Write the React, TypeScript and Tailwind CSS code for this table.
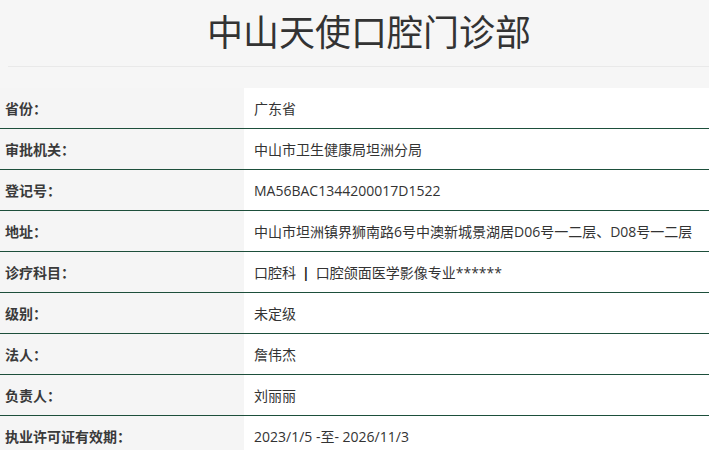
import React from "react";

const ROWS = [
  { label: "省份：", value: "广东省" },
  { label: "审批机关：", value: "中山市卫生健康局坦洲分局" },
  { label: "登记号：", value: "MA56BAC1344200017D1522" },
  { label: "地址：", value: "中山市坦洲镇界狮南路6号中澳新城景湖居D06号一二层、D08号一二层" },
  {
    label: "诊疗科目：",
    value: (
      <>
        口腔科<span className="mx-[6px] font-bold text-[#222]">|</span>口腔颌面医学影像专业******
      </>
    ),
  },
  { label: "级别：", value: "未定级" },
  { label: "法人：", value: "詹伟杰" },
  { label: "负责人：", value: "刘丽丽" },
  { label: "执业许可证有效期：", value: "2023/1/5 -至- 2026/11/3" },
];

const App = () => {
  return (
    <div
      className="min-h-screen w-full bg-[#f6f6f6] text-[#333] overflow-hidden"
      style={{ fontFamily: '"Noto Sans CJK SC", "Noto Sans", sans-serif' }}
    >
      <div className="ml-2 h-[67px] border-b border-[#e9e9e9] flex items-start justify-center pl-[21px]">
        <h1 className="text-[36px] leading-[58px] font-normal text-[#333] pt-[1px]">
          中山天使口腔门诊部
        </h1>
      </div>
      <div className="mt-[21px]">
        {ROWS.map((row) => (
          <div
            key={row.label}
            className="grid grid-cols-[244px_1fr] border-b border-[#1d4f3b]"
          >
            <div className="h-[40px] flex items-center pl-[5px] text-[14px] font-bold text-[#3a3a3a] bg-[#f5f5f5]">
              {row.label}
            </div>
            <div
              className="h-[40px] flex items-center pl-[10px] text-[14px] text-[#333] bg-white whitespace-nowrap"
              style={{ fontFamily: '"Open Sans", "Noto Sans CJK SC", sans-serif' }}
            >
              {row.value}
            </div>
          </div>
        ))}
      </div>
    </div>
  );
};

export default App;
